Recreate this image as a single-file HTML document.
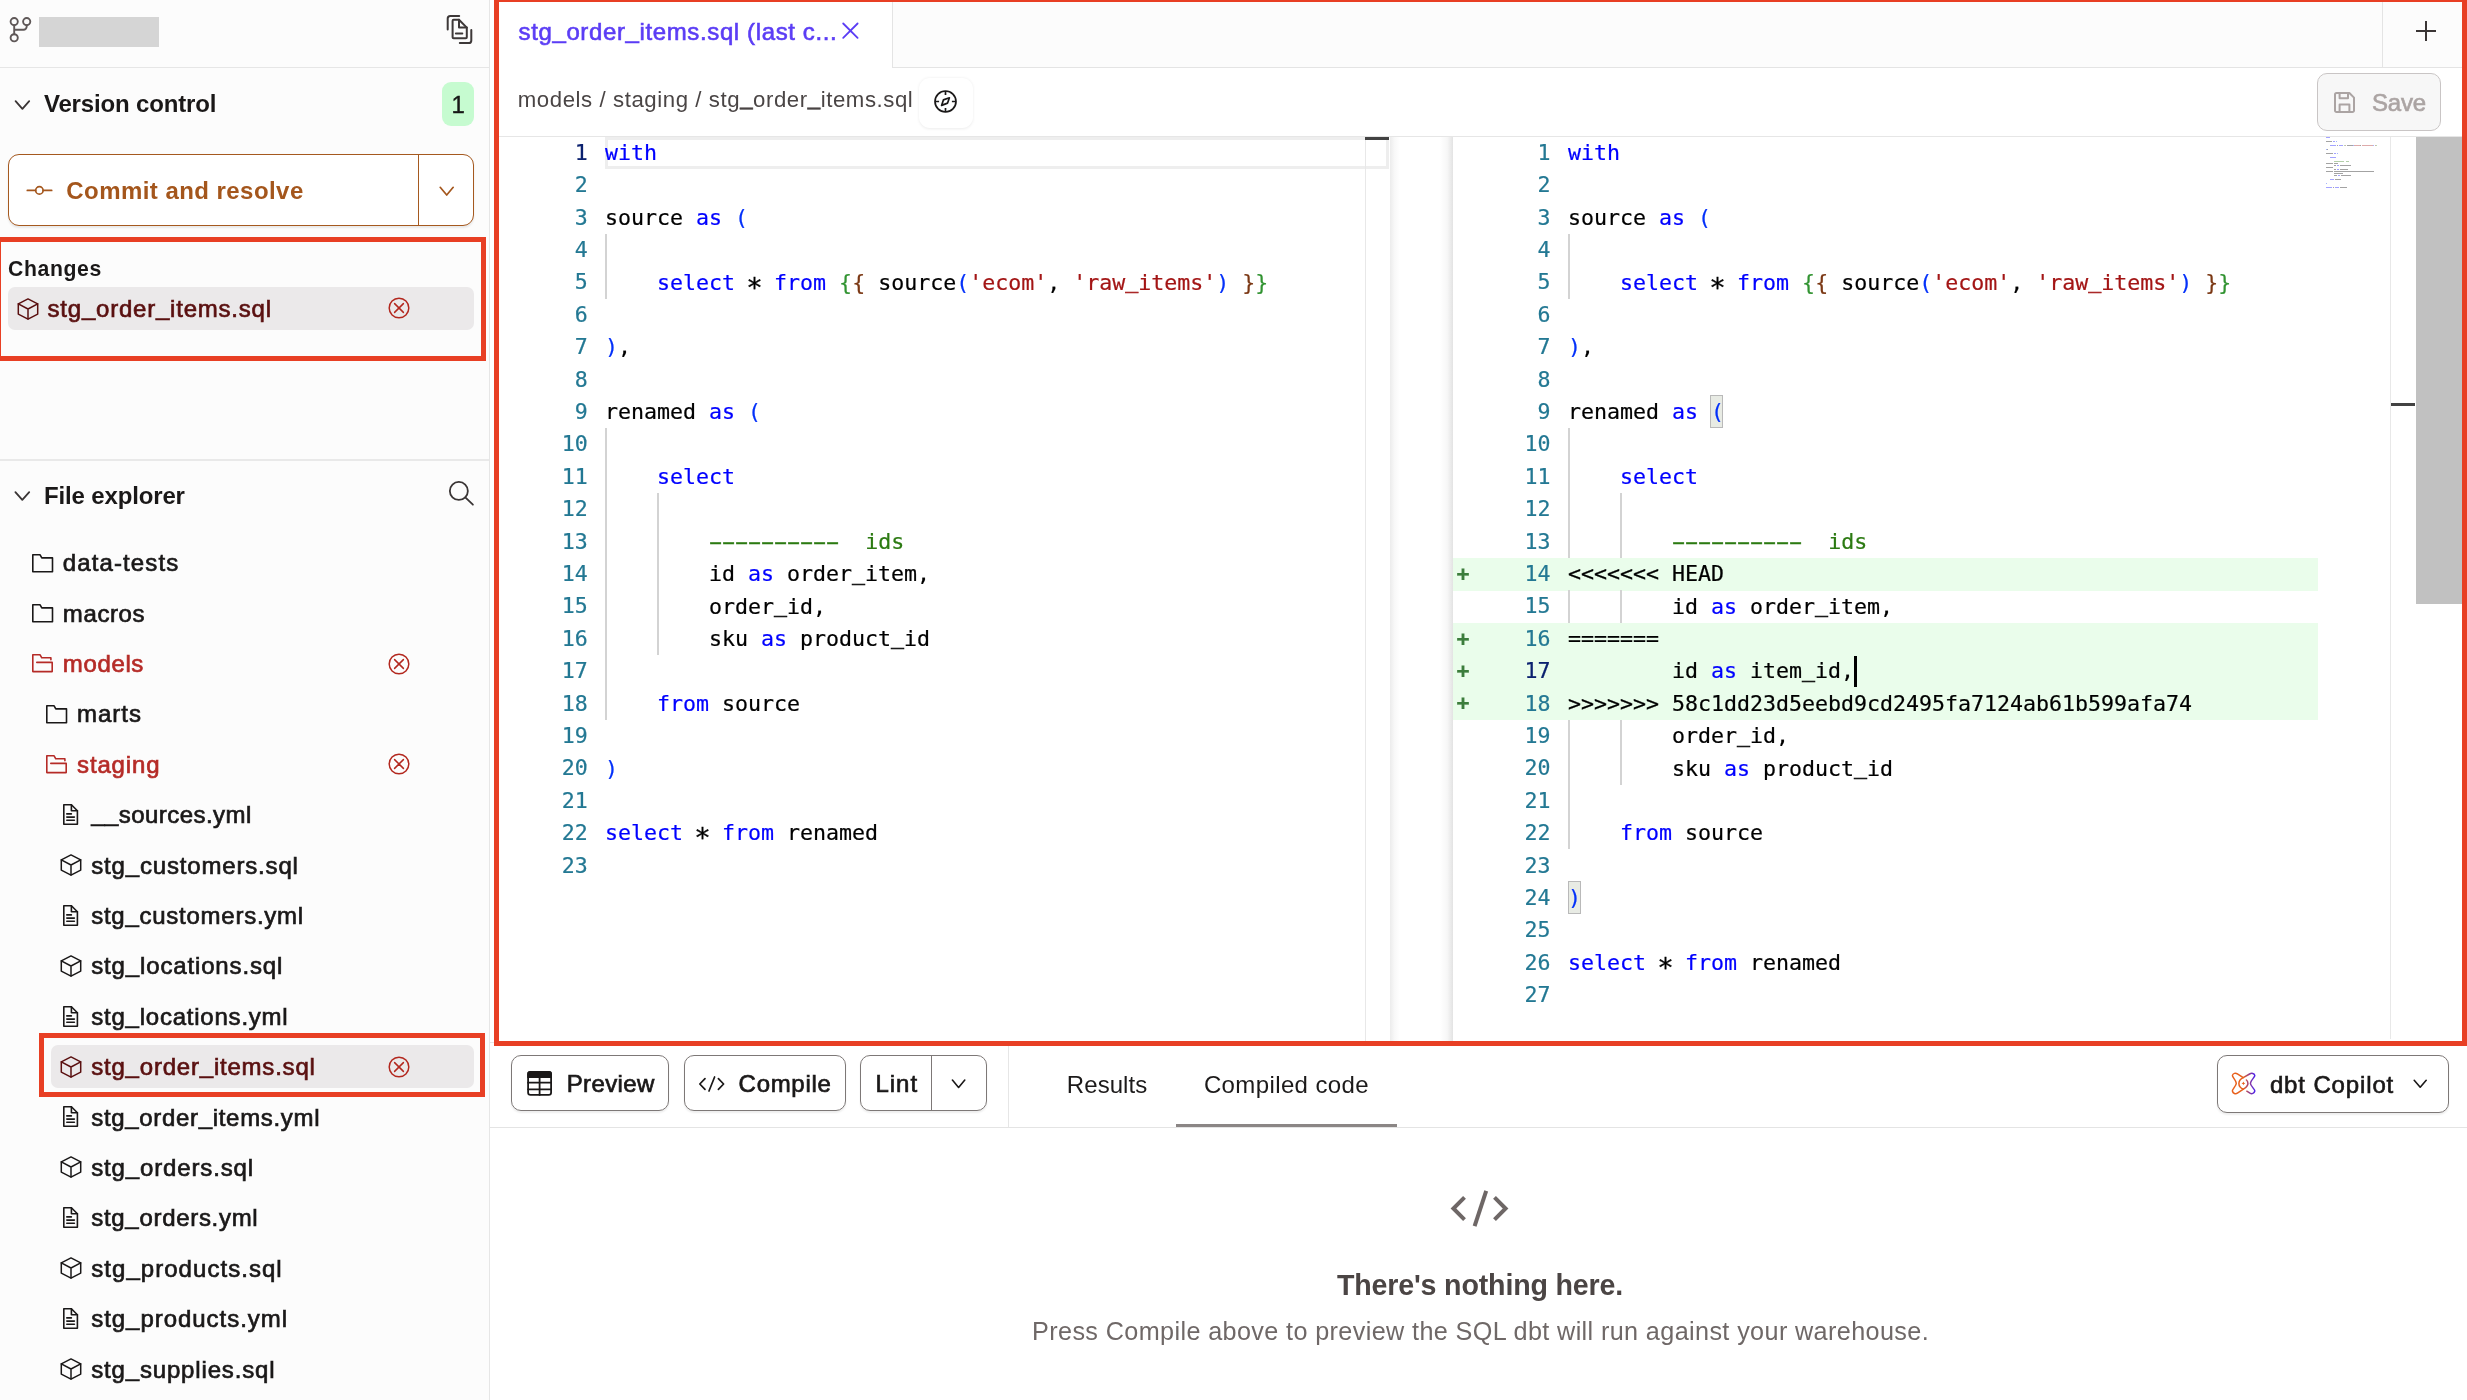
<!DOCTYPE html>
<html lang="en"><head><meta charset="utf-8"><title>dbt Cloud IDE</title>
<style>
*{box-sizing:border-box}
html,body{margin:0;padding:0}
body{width:2467px;height:1400px;overflow:hidden;background:#fff;position:relative;font-family:"Liberation Sans", sans-serif;}
#app{position:absolute;left:0;top:0;width:2467px;height:1400px;will-change:transform}
.a{position:absolute}
.t{position:absolute;white-space:pre;line-height:1;font-family:"Liberation Sans", sans-serif}
.ic{position:absolute;overflow:visible;fill:none;stroke-linecap:round;stroke-linejoin:round}
.code{position:absolute;white-space:pre;font-family:"DejaVu Sans Mono", "Liberation Mono", monospace;font-size:21.6px;line-height:32.4px;height:32.4px;color:#000;-webkit-text-stroke:.22px}
.ln{position:absolute;white-space:pre;font-family:"DejaVu Sans Mono", "Liberation Mono", monospace;font-size:21.6px;line-height:32.4px;height:32.4px;color:#237893;text-align:right;width:80px;-webkit-text-stroke:.2px}
.k{color:#0000ff}.p{color:#0431fa}.g{color:#319331}.b{color:#7b3814}.s{color:#a31515}.c{color:#2c7a12}
.ast{display:inline-block;transform:translateY(5.5px) scale(1.27)}
.d{display:inline-block;transform:scaleX(1.9);-webkit-text-stroke:.3px #2c7a12}
.u{position:relative;top:-1.6px;-webkit-text-stroke:.5px currentColor}
.uu{position:relative;top:-2px;-webkit-text-stroke:.6px currentColor}
.guide{position:absolute;width:2px;background:#d3d3d3}
.redbox{position:absolute;border:5px solid #e83f24}
.mm i{position:absolute;height:1.1px;opacity:.36}
</style></head>
<body>
<div id="app">
<div class="a" style="left:0;top:0;width:489px;height:1400px;background:#fcfcfc"></div>
<div class="a" style="left:489px;top:0;width:1px;height:1400px;background:#e6e6e6"></div>
<div class="a" style="left:0;top:67px;width:489px;height:1px;background:#e6e6e6"></div>
<svg class="ic" style="left:8px;top:15px" width="26" height="30" viewBox="8 15 26 30" ><g stroke="#5f5858" stroke-width="1.9"><circle cx="14.2" cy="21.6" r="3.6"/><circle cx="26.7" cy="21.6" r="3.6"/><circle cx="14.2" cy="37.8" r="3.6"/><path d="M14.2 25.2V34.2M26.7 25.2v1.3a3.2 3.2 0 0 1-3.2 3.2H14.2"/></g></svg>
<div class="a" style="left:38.5px;top:16.5px;width:120px;height:30px;background:#d5d5d5"></div>
<svg class="ic" style="left:445px;top:13px" width="30" height="33" viewBox="445 13 30 33" ><g stroke="#3d3838" stroke-width="2"><path d="M447.7 29.4V18.6a2.6 2.6 0 0 1 2.6-2.6H459.2"/><path d="M471.3 29.9V40.4a2.6 2.6 0 0 1-2.6 2.6H459.8"/><path d="M452.6 20.8a1 1 0 0 1 1-1H459l7.8 7.8V37.2a1 1 0 0 1-1 1H453.6a1 1 0 0 1-1-1Z"/><path d="M459 19.8V27.6H466.8"/><path d="M455.9 33.4H462.3"/></g></svg>
<svg class="ic" style="left:12px;top:98px" width="20" height="14" viewBox="12 98 20 14" ><polyline points="15.6,101.2 22.4,108.8 29.2,101.2" stroke="#3a3535" stroke-width="1.8"/></svg>
<span class="t" style="left:43.92px;top:92.18px;font-size:24px;font-weight:700;color:#1a1818;letter-spacing:-0.160px;">Version control</span>
<div class="a" style="left:442px;top:82px;width:32px;height:44px;border-radius:9px;background:#c6fbd0"></div>
<span class="t" style="left:451.52px;top:93.18px;font-size:24px;font-weight:400;color:#161616;letter-spacing:0.000px;-webkit-text-stroke:0.4px #161616;">1</span>
<div class="a" style="left:8px;top:154px;width:466px;height:72px;border:1.4px solid #a5591f;border-radius:11px;background:#fff;box-shadow:0 1.5px 2px rgba(0,0,0,0.08)"></div>
<div class="a" style="left:417.7px;top:154px;width:1.4px;height:72px;background:#a5591f"></div>
<svg class="ic" style="left:26px;top:184px" width="28" height="13" viewBox="26 184 28 13" ><g stroke="#a4561c" stroke-width="1.7"><path d="M27.3 190.4H35.6M43.2 190.4H51.7"/><circle cx="39.4" cy="190.4" r="3.7"/></g></svg>
<span class="t" style="left:66.32px;top:178.78px;font-size:24px;font-weight:700;color:#a4561c;letter-spacing:0.444px;">Commit and resolve</span>
<svg class="ic" style="left:438px;top:185px" width="18" height="12" viewBox="438 185 18 12" ><polyline points="440.2,187.3 446.7,195 453.2,187.3" stroke="#a4561c" stroke-width="1.7"/></svg>
<span class="t" style="left:7.95px;top:258.25px;font-size:21.2px;font-weight:700;color:#1a1818;letter-spacing:0.654px;">Changes</span>
<div class="a" style="left:8px;top:287px;width:466px;height:43px;border-radius:7px;background:#ebe9ea"></div>
<svg class="ic" style="left:15.5px;top:296.6px" width="24" height="24" viewBox="15.5 296.6 24 24" ><g stroke="#5a1010" stroke-width="1.5"><polygon points="27.5,298.5 37.2,303.5 37.2,313.7 27.5,318.7 17.8,313.7 17.8,303.5"/><path d="M17.8 303.5L27.5 308.6L37.2 303.5M27.5 308.6V318.7"/></g></svg>
<span class="t" style="left:47.52px;top:296.88px;font-size:24px;font-weight:400;color:#5a1010;letter-spacing:0.779px;-webkit-text-stroke:0.68px #5a1010;">stg<span class="uu">_</span>order<span class="uu">_</span>items.sql</span>
<svg class="ic" style="left:386.5px;top:296.4px" width="24" height="24" viewBox="386.5 296.4 24 24" ><g stroke="#b3281f" stroke-width="1.5"><circle cx="398.5" cy="308.4" r="9.8"/><path d="M394.1 304.0L402.9 312.79999999999995M402.9 304.0L394.1 312.79999999999995"/></g></svg>
<div class="redbox" style="left:-4px;top:237px;width:490px;height:124px"></div>
<div class="a" style="left:0;top:459px;width:489px;height:2px;background:#e9e9e9"></div>
<svg class="ic" style="left:12px;top:489px" width="20" height="14" viewBox="12 489 20 14" ><polyline points="15.4,492.2 22.3,499.9 29.2,492.2" stroke="#3a3535" stroke-width="1.8"/></svg>
<span class="t" style="left:43.92px;top:484.18px;font-size:24px;font-weight:700;color:#1a1818;letter-spacing:-0.140px;">File explorer</span>
<svg class="ic" style="left:446px;top:478px" width="30" height="30" viewBox="446 478 30 30" ><g stroke="#3a3535" stroke-width="1.8"><circle cx="458.85" cy="490.9" r="9"/><path d="M465.3 497.3L472.9 504.7"/></g></svg>
<svg class="ic" style="left:30.7px;top:552.5px" width="24" height="21" viewBox="30.7 552.5 24 21" ><path stroke="#1a1818" stroke-width="1.6" d="M32.5 571.2V554.3H39.8L41.5 557.4H52.2V571.2Z"/></svg>
<span class="t" style="left:62.82px;top:551.18px;font-size:24px;font-weight:400;color:#1a1818;letter-spacing:1.108px;-webkit-text-stroke:0.68px #1a1818;">data-tests</span>
<svg class="ic" style="left:30.7px;top:602.9px" width="24" height="21" viewBox="30.7 602.9 24 21" ><path stroke="#1a1818" stroke-width="1.6" d="M32.5 621.6V604.7H39.8L41.5 607.8H52.2V621.6Z"/></svg>
<span class="t" style="left:62.82px;top:601.58px;font-size:24px;font-weight:400;color:#1a1818;letter-spacing:0.614px;-webkit-text-stroke:0.68px #1a1818;">macros</span>
<svg class="ic" style="left:30.7px;top:653.3px" width="24" height="21" viewBox="30.7 653.3 24 21" ><path stroke="#b52b27" stroke-width="1.6" d="M36.5 662.7H51.9V671.9H32.5V655.1H39.8L41.5 658.1H50.6V660.1"/></svg>
<span class="t" style="left:62.82px;top:651.98px;font-size:24px;font-weight:400;color:#b52b27;letter-spacing:0.637px;-webkit-text-stroke:0.68px #b52b27;">models</span>
<svg class="ic" style="left:386.5px;top:651.5px" width="24" height="24" viewBox="386.5 651.5 24 24" ><g stroke="#b3281f" stroke-width="1.5"><circle cx="398.5" cy="663.5" r="9.8"/><path d="M394.1 659.1L402.9 667.9M402.9 659.1L394.1 667.9"/></g></svg>
<svg class="ic" style="left:44.9px;top:703.7px" width="24" height="21" viewBox="44.9 703.7 24 21" ><path stroke="#1a1818" stroke-width="1.6" d="M46.7 722.4V705.5H54.0L55.7 708.6H66.4V722.4Z"/></svg>
<span class="t" style="left:77.02px;top:702.38px;font-size:24px;font-weight:400;color:#1a1818;letter-spacing:0.990px;-webkit-text-stroke:0.68px #1a1818;">marts</span>
<svg class="ic" style="left:44.9px;top:754.1px" width="24" height="21" viewBox="44.9 754.1 24 21" ><path stroke="#b52b27" stroke-width="1.6" d="M50.7 763.5H66.1V772.7H46.7V755.9H54.0L55.7 758.9H64.8V760.9"/></svg>
<span class="t" style="left:77.02px;top:752.78px;font-size:24px;font-weight:400;color:#b52b27;letter-spacing:0.862px;-webkit-text-stroke:0.68px #b52b27;">staging</span>
<svg class="ic" style="left:386.5px;top:752.3000000000001px" width="24" height="24" viewBox="386.5 752.3000000000001 24 24" ><g stroke="#b3281f" stroke-width="1.5"><circle cx="398.5" cy="764.3000000000001" r="9.8"/><path d="M394.1 759.9000000000001L402.9 768.7M402.9 759.9000000000001L394.1 768.7"/></g></svg>
<svg class="ic" style="left:62.199999999999996px;top:803.0px" width="18" height="24" viewBox="62.199999999999996 803.0 18 24" ><g stroke="#1a1818" stroke-width="1.6"><path d="M64.0 804.8H71.6L77.6 810.8V824.2H64.0Z"/><path d="M71.6 804.8V810.8H77.6"/><path d="M67.0 813.9H71.6M67.0 817.1H74.6M67.0 820.3H74.6"/></g></svg>
<span class="t" style="left:91.22px;top:803.18px;font-size:24px;font-weight:400;color:#1a1818;letter-spacing:0.444px;-webkit-text-stroke:0.68px #1a1818;"><span class="uu">_</span><span class="uu">_</span>sources.yml</span>
<svg class="ic" style="left:58.69999999999999px;top:853.0px" width="24" height="24" viewBox="58.69999999999999 853.0 24 24" ><g stroke="#1a1818" stroke-width="1.5"><polygon points="70.7,854.9 80.4,859.9 80.4,870.1 70.7,875.1 61.0,870.1 61.0,859.9"/><path d="M61.0 859.9L70.7 865.0L80.4 859.9M70.7 865.0V875.1"/></g></svg>
<span class="t" style="left:91.22px;top:853.58px;font-size:24px;font-weight:400;color:#1a1818;letter-spacing:0.828px;-webkit-text-stroke:0.68px #1a1818;">stg<span class="uu">_</span>customers.sql</span>
<svg class="ic" style="left:62.199999999999996px;top:903.8px" width="18" height="24" viewBox="62.199999999999996 903.8 18 24" ><g stroke="#1a1818" stroke-width="1.6"><path d="M64.0 905.6H71.6L77.6 911.6V925.0H64.0Z"/><path d="M71.6 905.6V911.6H77.6"/><path d="M67.0 914.7H71.6M67.0 917.9H74.6M67.0 921.1H74.6"/></g></svg>
<span class="t" style="left:91.22px;top:903.98px;font-size:24px;font-weight:400;color:#1a1818;letter-spacing:0.737px;-webkit-text-stroke:0.68px #1a1818;">stg<span class="uu">_</span>customers.yml</span>
<svg class="ic" style="left:58.69999999999999px;top:953.8000000000001px" width="24" height="24" viewBox="58.69999999999999 953.8000000000001 24 24" ><g stroke="#1a1818" stroke-width="1.5"><polygon points="70.7,955.7 80.4,960.7 80.4,970.9 70.7,975.9 61.0,970.9 61.0,960.7"/><path d="M61.0 960.7L70.7 965.8L80.4 960.7M70.7 965.8V975.9"/></g></svg>
<span class="t" style="left:91.22px;top:954.38px;font-size:24px;font-weight:400;color:#1a1818;letter-spacing:0.851px;-webkit-text-stroke:0.68px #1a1818;">stg<span class="uu">_</span>locations.sql</span>
<svg class="ic" style="left:62.199999999999996px;top:1004.5999999999999px" width="18" height="24" viewBox="62.199999999999996 1004.5999999999999 18 24" ><g stroke="#1a1818" stroke-width="1.6"><path d="M64.0 1006.4H71.6L77.6 1012.4V1025.8H64.0Z"/><path d="M71.6 1006.4V1012.4H77.6"/><path d="M67.0 1015.5H71.6M67.0 1018.7H74.6M67.0 1021.9H74.6"/></g></svg>
<span class="t" style="left:91.22px;top:1004.78px;font-size:24px;font-weight:400;color:#1a1818;letter-spacing:0.774px;-webkit-text-stroke:0.68px #1a1818;">stg<span class="uu">_</span>locations.yml</span>
<div class="a" style="left:51px;top:1045.1px;width:423px;height:43px;border-radius:7px;background:#ebe9ea"></div>
<svg class="ic" style="left:58.69999999999999px;top:1054.6000000000001px" width="24" height="24" viewBox="58.69999999999999 1054.6000000000001 24 24" ><g stroke="#5a1010" stroke-width="1.5"><polygon points="70.7,1056.5 80.4,1061.5 80.4,1071.7 70.7,1076.7 61.0,1071.7 61.0,1061.5"/><path d="M61.0 1061.5L70.7 1066.6L80.4 1061.5M70.7 1066.6V1076.7"/></g></svg>
<span class="t" style="left:91.22px;top:1055.18px;font-size:24px;font-weight:400;color:#5a1010;letter-spacing:0.790px;-webkit-text-stroke:0.68px #5a1010;">stg<span class="uu">_</span>order<span class="uu">_</span>items.sql</span>
<svg class="ic" style="left:386.5px;top:1054.7px" width="24" height="24" viewBox="386.5 1054.7 24 24" ><g stroke="#b3281f" stroke-width="1.5"><circle cx="398.5" cy="1066.7" r="9.8"/><path d="M394.1 1062.3L402.9 1071.1000000000001M402.9 1062.3L394.1 1071.1000000000001"/></g></svg>
<svg class="ic" style="left:62.199999999999996px;top:1105.4px" width="18" height="24" viewBox="62.199999999999996 1105.4 18 24" ><g stroke="#1a1818" stroke-width="1.6"><path d="M64.0 1107.2H71.6L77.6 1113.2V1126.6H64.0Z"/><path d="M71.6 1107.2V1113.2H77.6"/><path d="M67.0 1116.3H71.6M67.0 1119.5H74.6M67.0 1122.7H74.6"/></g></svg>
<span class="t" style="left:91.22px;top:1105.58px;font-size:24px;font-weight:400;color:#1a1818;letter-spacing:0.677px;-webkit-text-stroke:0.68px #1a1818;">stg<span class="uu">_</span>order<span class="uu">_</span>items.yml</span>
<svg class="ic" style="left:58.69999999999999px;top:1155.4px" width="24" height="24" viewBox="58.69999999999999 1155.4 24 24" ><g stroke="#1a1818" stroke-width="1.5"><polygon points="70.7,1157.3 80.4,1162.3 80.4,1172.5 70.7,1177.5 61.0,1172.5 61.0,1162.3"/><path d="M61.0 1162.3L70.7 1167.4L80.4 1162.3M70.7 1167.4V1177.5"/></g></svg>
<span class="t" style="left:91.22px;top:1155.98px;font-size:24px;font-weight:400;color:#1a1818;letter-spacing:0.855px;-webkit-text-stroke:0.68px #1a1818;">stg<span class="uu">_</span>orders.sql</span>
<svg class="ic" style="left:62.199999999999996px;top:1206.1999999999998px" width="18" height="24" viewBox="62.199999999999996 1206.1999999999998 18 24" ><g stroke="#1a1818" stroke-width="1.6"><path d="M64.0 1208.0H71.6L77.6 1214.0V1227.4H64.0Z"/><path d="M71.6 1208.0V1214.0H77.6"/><path d="M67.0 1217.1H71.6M67.0 1220.3H74.6M67.0 1223.5H74.6"/></g></svg>
<span class="t" style="left:91.22px;top:1206.38px;font-size:24px;font-weight:400;color:#1a1818;letter-spacing:0.698px;-webkit-text-stroke:0.68px #1a1818;">stg<span class="uu">_</span>orders.yml</span>
<svg class="ic" style="left:58.69999999999999px;top:1256.2px" width="24" height="24" viewBox="58.69999999999999 1256.2 24 24" ><g stroke="#1a1818" stroke-width="1.5"><polygon points="70.7,1258.1 80.4,1263.1 80.4,1273.3 70.7,1278.3 61.0,1273.3 61.0,1263.1"/><path d="M61.0 1263.1L70.7 1268.2L80.4 1263.1M70.7 1268.2V1278.3"/></g></svg>
<span class="t" style="left:91.22px;top:1256.78px;font-size:24px;font-weight:400;color:#1a1818;letter-spacing:1.046px;-webkit-text-stroke:0.68px #1a1818;">stg<span class="uu">_</span>products.sql</span>
<svg class="ic" style="left:62.199999999999996px;top:1307.0px" width="18" height="24" viewBox="62.199999999999996 1307.0 18 24" ><g stroke="#1a1818" stroke-width="1.6"><path d="M64.0 1308.8H71.6L77.6 1314.8V1328.2H64.0Z"/><path d="M71.6 1308.8V1314.8H77.6"/><path d="M67.0 1317.9H71.6M67.0 1321.1H74.6M67.0 1324.3H74.6"/></g></svg>
<span class="t" style="left:91.22px;top:1307.18px;font-size:24px;font-weight:400;color:#1a1818;letter-spacing:0.957px;-webkit-text-stroke:0.68px #1a1818;">stg<span class="uu">_</span>products.yml</span>
<svg class="ic" style="left:58.69999999999999px;top:1357.0000000000002px" width="24" height="24" viewBox="58.69999999999999 1357.0000000000002 24 24" ><g stroke="#1a1818" stroke-width="1.5"><polygon points="70.7,1358.9 80.4,1363.9 80.4,1374.1 70.7,1379.1 61.0,1374.1 61.0,1363.9"/><path d="M61.0 1363.9L70.7 1369.0L80.4 1363.9M70.7 1369.0V1379.1"/></g></svg>
<span class="t" style="left:91.22px;top:1357.58px;font-size:24px;font-weight:400;color:#1a1818;letter-spacing:0.833px;-webkit-text-stroke:0.68px #1a1818;">stg<span class="uu">_</span>supplies.sql</span>
<div class="redbox" style="left:39.3px;top:1032.8px;width:445.4px;height:64.6px"></div>
<div class="a" style="left:892px;top:0;width:1575px;height:68px;background:#fcfcfc;border-left:1px solid #e4e4e4;border-bottom:1.5px solid #e4e4e4"></div>
<div class="a" style="left:2382px;top:0;width:1px;height:67px;background:#e4e4e4"></div>
<span class="t" style="left:518.52px;top:19.68px;font-size:24px;font-weight:400;color:#5b3df5;letter-spacing:0.622px;-webkit-text-stroke:0.62px #5b3df5;">stg<span class="uu">_</span>order<span class="uu">_</span>items.sql (last c...</span>
<svg class="ic" style="left:840px;top:20px" width="21" height="21" viewBox="840 20 21 21" ><path stroke="#5b3df5" stroke-width="1.8" d="M843.2 23.5L857.6 37.9M857.6 23.5L843.2 37.9"/></svg>
<svg class="ic" style="left:2414px;top:19px" width="24" height="24" viewBox="2414 19 24 24" ><path stroke="#3a3535" stroke-width="2" stroke-linecap="butt" d="M2416 31H2436M2426 21V41"/></svg>
<span class="t" style="left:517.80px;top:88.51px;font-size:22.2px;font-weight:400;color:#4a4545;letter-spacing:0.576px;">models / staging / stg<span class="uu">_</span>order<span class="uu">_</span>items.sql</span>
<div class="a" style="left:918.5px;top:77.5px;width:54px;height:50px;border-radius:11px;background:#fff;box-shadow:0 0.5px 3px rgba(0,0,0,0.08)"></div>
<svg class="ic" style="left:932px;top:88px" width="28" height="28" viewBox="932 88 28 28" ><g stroke="#1a1818" stroke-width="1.7" stroke-linecap="butt"><circle cx="945.5" cy="101.5" r="10.5"/><path d="M945.5 91.1v4M945.5 107.9v4M935.1 101.5h4M951.9 101.5h4"/><path d="M941.6 105.4L943.4 99.9L949.4 97.8L947.6 103.1Z"/></g></svg>
<div class="a" style="left:2317px;top:73px;width:124px;height:58px;border-radius:10px;border:1px solid #c9c5c5;background:#f7f7f7"></div>
<svg class="ic" style="left:2332px;top:90px" width="25" height="25" viewBox="2332 90 25 25" ><g stroke="#aba4a3" stroke-width="2"><path d="M2335 94.5a1.5 1.5 0 0 1 1.5-1.5H2349.4L2354 97.6V110.5a1.5 1.5 0 0 1-1.5 1.5H2336.5a1.5 1.5 0 0 1-1.5-1.5Z"/><path d="M2339.6 93V98.2H2348V93"/><path d="M2339.6 112V104.4H2349.4V112"/></g></svg>
<span class="t" style="left:2371.92px;top:91.38px;font-size:24px;font-weight:400;color:#aba4a3;letter-spacing:-0.181px;-webkit-text-stroke:0.62px #aba4a3;">Save</span>
<div class="a" style="left:499px;top:136px;width:1963px;height:1px;background:#e6e6e6"></div>
<div class="a" style="left:605px;top:136.6px;width:784px;height:32.4px;border:3.6px solid #eeeeee"></div>
<div class="ln" style="left:507.7px;top:136.8px;color:#0b216f">1</div>
<div class="code" style="left:605px;top:137.0px"><span class="k">with</span></div>
<div class="ln" style="left:507.7px;top:169.2px">2</div>
<div class="ln" style="left:507.7px;top:201.6px">3</div>
<div class="code" style="left:605px;top:201.8px">source <span class="k">as</span> <span class="p">(</span></div>
<div class="ln" style="left:507.7px;top:234.0px">4</div>
<div class="ln" style="left:507.7px;top:266.4px">5</div>
<div class="code" style="left:605px;top:266.6px">    <span class="k">select</span> <span class="ast">*</span> <span class="k">from</span> <span class="g">{</span><span class="b">{</span> source<span class="p">(</span><span class="s">'ecom'</span>, <span class="s">'raw<span class="u">_</span>items'</span><span class="p">)</span> <span class="b">}</span><span class="g">}</span></div>
<div class="ln" style="left:507.7px;top:298.8px">6</div>
<div class="ln" style="left:507.7px;top:331.2px">7</div>
<div class="code" style="left:605px;top:331.4px"><span class="p">)</span>,</div>
<div class="ln" style="left:507.7px;top:363.6px">8</div>
<div class="ln" style="left:507.7px;top:396.0px">9</div>
<div class="code" style="left:605px;top:396.2px">renamed <span class="k">as</span> <span class="p">(</span></div>
<div class="ln" style="left:507.7px;top:428.4px">10</div>
<div class="ln" style="left:507.7px;top:460.8px">11</div>
<div class="code" style="left:605px;top:461.0px">    <span class="k">select</span></div>
<div class="ln" style="left:507.7px;top:493.2px">12</div>
<div class="ln" style="left:507.7px;top:525.6px">13</div>
<div class="code" style="left:605px;top:525.8px">        <span class="c"><span class="d">-</span><span class="d">-</span><span class="d">-</span><span class="d">-</span><span class="d">-</span><span class="d">-</span><span class="d">-</span><span class="d">-</span><span class="d">-</span><span class="d">-</span>  ids</span></div>
<div class="ln" style="left:507.7px;top:558.0px">14</div>
<div class="code" style="left:605px;top:558.2px">        id <span class="k">as</span> order<span class="u">_</span>item,</div>
<div class="ln" style="left:507.7px;top:590.4px">15</div>
<div class="code" style="left:605px;top:590.6px">        order<span class="u">_</span>id,</div>
<div class="ln" style="left:507.7px;top:622.8px">16</div>
<div class="code" style="left:605px;top:623.0px">        sku <span class="k">as</span> product<span class="u">_</span>id</div>
<div class="ln" style="left:507.7px;top:655.2px">17</div>
<div class="ln" style="left:507.7px;top:687.6px">18</div>
<div class="code" style="left:605px;top:687.8px">    <span class="k">from</span> source</div>
<div class="ln" style="left:507.7px;top:720.0px">19</div>
<div class="ln" style="left:507.7px;top:752.4px">20</div>
<div class="code" style="left:605px;top:752.6px"><span class="p">)</span></div>
<div class="ln" style="left:507.7px;top:784.8px">21</div>
<div class="ln" style="left:507.7px;top:817.2px">22</div>
<div class="code" style="left:605px;top:817.4px"><span class="k">select</span> <span class="ast">*</span> <span class="k">from</span> renamed</div>
<div class="ln" style="left:507.7px;top:849.6px">23</div>
<div class="guide" style="left:605px;top:233.8px;height:64.8px"></div>
<div class="guide" style="left:605px;top:428.2px;height:291.6px"></div>
<div class="guide" style="left:657px;top:493.0px;height:162.0px"></div>
<div class="a" style="left:1364.5px;top:137px;width:1px;height:904px;background:#e8e8e8"></div>
<div class="a" style="left:1365px;top:136.6px;width:24px;height:3px;background:#424242"></div>
<div class="a" style="left:1390px;top:137px;width:10px;height:904px;background:linear-gradient(90deg,#ececec,#f8f8f8 45%,#fff)"></div>
<div class="a" style="left:1440px;top:137px;width:12.5px;height:904px;background:linear-gradient(90deg,#fff,#f7f7f7 55%,#e3e3e3)"></div>
<div class="a" style="left:1452.5px;top:557.8px;width:865.5px;height:32.9px;background:#eafdeb"></div>
<div class="a" style="left:1452.5px;top:622.6px;width:865.5px;height:97.7px;background:#eafdeb"></div>
<div class="code" style="left:1456.5px;top:557.8px;color:#3c7d3c;font-weight:700">+</div>
<div class="code" style="left:1456.5px;top:622.6px;color:#3c7d3c;font-weight:700">+</div>
<div class="code" style="left:1456.5px;top:655.0px;color:#3c7d3c;font-weight:700">+</div>
<div class="code" style="left:1456.5px;top:687.4px;color:#3c7d3c;font-weight:700">+</div>
<div class="a" style="left:1710px;top:395.4px;width:13.4px;height:33px;background:#e8ebe4;border:1px solid #b9b9b9"></div>
<div class="a" style="left:1567.6px;top:881.4px;width:13.4px;height:33px;background:#e8ebe4;border:1px solid #b9b9b9"></div>
<div class="ln" style="left:1470.6px;top:136.8px">1</div>
<div class="code" style="left:1568px;top:137.0px"><span class="k">with</span></div>
<div class="ln" style="left:1470.6px;top:169.2px">2</div>
<div class="ln" style="left:1470.6px;top:201.6px">3</div>
<div class="code" style="left:1568px;top:201.8px">source <span class="k">as</span> <span class="p">(</span></div>
<div class="ln" style="left:1470.6px;top:234.0px">4</div>
<div class="ln" style="left:1470.6px;top:266.4px">5</div>
<div class="code" style="left:1568px;top:266.6px">    <span class="k">select</span> <span class="ast">*</span> <span class="k">from</span> <span class="g">{</span><span class="b">{</span> source<span class="p">(</span><span class="s">'ecom'</span>, <span class="s">'raw<span class="u">_</span>items'</span><span class="p">)</span> <span class="b">}</span><span class="g">}</span></div>
<div class="ln" style="left:1470.6px;top:298.8px">6</div>
<div class="ln" style="left:1470.6px;top:331.2px">7</div>
<div class="code" style="left:1568px;top:331.4px"><span class="p">)</span>,</div>
<div class="ln" style="left:1470.6px;top:363.6px">8</div>
<div class="ln" style="left:1470.6px;top:396.0px">9</div>
<div class="code" style="left:1568px;top:396.2px">renamed <span class="k">as</span> <span class="p">(</span></div>
<div class="ln" style="left:1470.6px;top:428.4px">10</div>
<div class="ln" style="left:1470.6px;top:460.8px">11</div>
<div class="code" style="left:1568px;top:461.0px">    <span class="k">select</span></div>
<div class="ln" style="left:1470.6px;top:493.2px">12</div>
<div class="ln" style="left:1470.6px;top:525.6px">13</div>
<div class="code" style="left:1568px;top:525.8px">        <span class="c"><span class="d">-</span><span class="d">-</span><span class="d">-</span><span class="d">-</span><span class="d">-</span><span class="d">-</span><span class="d">-</span><span class="d">-</span><span class="d">-</span><span class="d">-</span>  ids</span></div>
<div class="ln" style="left:1470.6px;top:558.0px">14</div>
<div class="code" style="left:1568px;top:558.2px">&lt;&lt;&lt;&lt;&lt;&lt;&lt; HEAD</div>
<div class="ln" style="left:1470.6px;top:590.4px">15</div>
<div class="code" style="left:1568px;top:590.6px">        id <span class="k">as</span> order<span class="u">_</span>item,</div>
<div class="ln" style="left:1470.6px;top:622.8px">16</div>
<div class="code" style="left:1568px;top:623.0px">=======</div>
<div class="ln" style="left:1470.6px;top:655.2px;color:#0b216f">17</div>
<div class="code" style="left:1568px;top:655.4px">        id <span class="k">as</span> item<span class="u">_</span>id,</div>
<div class="ln" style="left:1470.6px;top:687.6px">18</div>
<div class="code" style="left:1568px;top:687.8px">&gt;&gt;&gt;&gt;&gt;&gt;&gt; 58c1dd23d5eebd9cd2495fa7124ab61b599afa74</div>
<div class="ln" style="left:1470.6px;top:720.0px">19</div>
<div class="code" style="left:1568px;top:720.2px">        order<span class="u">_</span>id,</div>
<div class="ln" style="left:1470.6px;top:752.4px">20</div>
<div class="code" style="left:1568px;top:752.6px">        sku <span class="k">as</span> product<span class="u">_</span>id</div>
<div class="ln" style="left:1470.6px;top:784.8px">21</div>
<div class="ln" style="left:1470.6px;top:817.2px">22</div>
<div class="code" style="left:1568px;top:817.4px">    <span class="k">from</span> source</div>
<div class="ln" style="left:1470.6px;top:849.6px">23</div>
<div class="ln" style="left:1470.6px;top:882.0px">24</div>
<div class="code" style="left:1568px;top:882.2px"><span class="p">)</span></div>
<div class="ln" style="left:1470.6px;top:914.4px">25</div>
<div class="ln" style="left:1470.6px;top:946.8px">26</div>
<div class="code" style="left:1568px;top:947.0px"><span class="k">select</span> <span class="ast">*</span> <span class="k">from</span> renamed</div>
<div class="ln" style="left:1470.6px;top:979.2px">27</div>
<div class="guide" style="left:1568px;top:233.8px;height:64.8px"></div>
<div class="guide" style="left:1568px;top:428.2px;height:129.6px"></div>
<div class="guide" style="left:1568px;top:590.2px;height:32.4px"></div>
<div class="guide" style="left:1568px;top:719.8px;height:129.6px"></div>
<div class="guide" style="left:1620px;top:493.0px;height:64.8px"></div>
<div class="guide" style="left:1620px;top:590.2px;height:32.4px"></div>
<div class="guide" style="left:1620px;top:719.8px;height:64.8px"></div>
<div class="a" style="left:1854px;top:656.0px;width:3.4px;height:31px;background:#000"></div>
<div class="a" style="left:2390px;top:137px;width:1px;height:901.5px;background:#e8e8e8"></div>
<div class="a" style="left:2391px;top:403px;width:23.5px;height:3px;background:#424242"></div>
<div class="a" style="left:2416px;top:137px;width:46px;height:467px;background:#c1c1c1"></div>
<div class="mm"><i style="left:2326px;top:137.3px;width:4px;background:#0000ff"></i><i style="left:2326px;top:141.3px;width:6px;background:#000000"></i><i style="left:2333px;top:141.3px;width:2px;background:#0000ff"></i><i style="left:2336px;top:141.3px;width:1px;background:#0431fa"></i><i style="left:2330px;top:145.3px;width:6px;background:#0000ff"></i><i style="left:2337px;top:145.3px;width:1px;background:#000000"></i><i style="left:2339px;top:145.3px;width:4px;background:#0000ff"></i><i style="left:2344px;top:145.3px;width:1px;background:#319331"></i><i style="left:2345px;top:145.3px;width:1px;background:#7b3814"></i><i style="left:2347px;top:145.3px;width:6px;background:#000000"></i><i style="left:2353px;top:145.3px;width:1px;background:#0431fa"></i><i style="left:2354px;top:145.3px;width:6px;background:#a31515"></i><i style="left:2360px;top:145.3px;width:1px;background:#000000"></i><i style="left:2362px;top:145.3px;width:11px;background:#a31515"></i><i style="left:2373px;top:145.3px;width:1px;background:#0431fa"></i><i style="left:2375px;top:145.3px;width:1px;background:#7b3814"></i><i style="left:2376px;top:145.3px;width:1px;background:#319331"></i><i style="left:2326px;top:149.3px;width:1px;background:#0431fa"></i><i style="left:2327px;top:149.3px;width:1px;background:#000000"></i><i style="left:2326px;top:153.3px;width:7px;background:#000000"></i><i style="left:2334px;top:153.3px;width:2px;background:#0000ff"></i><i style="left:2337px;top:153.3px;width:1px;background:#0431fa"></i><i style="left:2330px;top:157.3px;width:6px;background:#0000ff"></i><i style="left:2334px;top:161.3px;width:10px;background:#2c7a12"></i><i style="left:2346px;top:161.3px;width:3px;background:#2c7a12"></i><i style="left:2326px;top:163.3px;width:7px;background:#000000"></i><i style="left:2334px;top:163.3px;width:4px;background:#000000"></i><i style="left:2334px;top:165.3px;width:2px;background:#000000"></i><i style="left:2337px;top:165.3px;width:2px;background:#0000ff"></i><i style="left:2340px;top:165.3px;width:11px;background:#000000"></i><i style="left:2326px;top:167.3px;width:7px;background:#000000"></i><i style="left:2334px;top:169.3px;width:2px;background:#000000"></i><i style="left:2337px;top:169.3px;width:2px;background:#0000ff"></i><i style="left:2340px;top:169.3px;width:8px;background:#000000"></i><i style="left:2326px;top:171.3px;width:7px;background:#000000"></i><i style="left:2334px;top:171.3px;width:40px;background:#000000"></i><i style="left:2334px;top:173.3px;width:9px;background:#000000"></i><i style="left:2334px;top:175.3px;width:3px;background:#000000"></i><i style="left:2338px;top:175.3px;width:2px;background:#0000ff"></i><i style="left:2341px;top:175.3px;width:10px;background:#000000"></i><i style="left:2330px;top:179.3px;width:4px;background:#0000ff"></i><i style="left:2335px;top:179.3px;width:6px;background:#000000"></i><i style="left:2326px;top:183.3px;width:1px;background:#0431fa"></i><i style="left:2326px;top:187.3px;width:6px;background:#0000ff"></i><i style="left:2333px;top:187.3px;width:1px;background:#000000"></i><i style="left:2335px;top:187.3px;width:4px;background:#0000ff"></i><i style="left:2340px;top:187.3px;width:7px;background:#000000"></i></div>
<div class="a" style="left:490px;top:1041.5px;width:1977px;height:1px;background:#e6e6e6"></div>
<div class="a" style="left:490px;top:1127px;width:1977px;height:1px;background:#e4e4e4"></div>
<div class="a" style="left:1008px;top:1045px;width:1px;height:82px;background:#e6e6e6"></div>
<div class="a" style="left:511px;top:1055px;width:158px;height:56px;border:1.2px solid #7d7877;border-radius:10px;background:#fff;box-shadow:0 1.5px 2px rgba(0,0,0,0.07)"></div>
<svg class="ic" style="left:526px;top:1070px" width="28" height="28" viewBox="526 1070 28 28" ><g stroke="#1a1818" stroke-width="1.8"><rect x="528.1" y="1072" width="23" height="22.9" rx="2.4"/><path d="M528.1 1082.7H551.1M528.1 1089.3H551.1M539.6 1076V1094.9"/></g><path d="M528.1 1077.2V1074.4a2.4 2.4 0 0 1 2.4-2.4H548.7a2.4 2.4 0 0 1 2.4 2.4V1077.2Z" fill="#1a1818" stroke="#1a1818" stroke-width="1.8"/></svg>
<span class="t" style="left:566.72px;top:1072.08px;font-size:24px;font-weight:400;color:#1a1818;letter-spacing:0.383px;-webkit-text-stroke:0.68px #1a1818;">Preview</span>
<div class="a" style="left:684px;top:1055px;width:162px;height:56px;border:1.2px solid #7d7877;border-radius:10px;background:#fff;box-shadow:0 1.5px 2px rgba(0,0,0,0.07)"></div>
<svg class="ic" style="left:697px;top:1074px" width="30" height="20" viewBox="697 1074 30 20" ><g stroke="#1a1818" stroke-width="1.7"><polyline points="705,1078.6 699.8,1084 705,1089.4"/><path d="M714.6 1077L709 1091"/><polyline points="718.4,1078.6 723.6,1084 718.4,1089.4"/></g></svg>
<span class="t" style="left:738.62px;top:1072.08px;font-size:24px;font-weight:400;color:#1a1818;letter-spacing:0.688px;-webkit-text-stroke:0.68px #1a1818;">Compile</span>
<div class="a" style="left:860px;top:1055px;width:127px;height:56px;border:1.2px solid #7d7877;border-radius:10px;background:#fff;box-shadow:0 1.5px 2px rgba(0,0,0,0.07)"></div>
<div class="a" style="left:930.8px;top:1055px;width:1.2px;height:56px;background:#7d7877"></div>
<span class="t" style="left:875.42px;top:1072.08px;font-size:24px;font-weight:400;color:#1a1818;letter-spacing:0.986px;-webkit-text-stroke:0.68px #1a1818;">Lint</span>
<svg class="ic" style="left:950px;top:1077px" width="18" height="13" viewBox="950 1077 18 13" ><polyline points="952.4,1080 958.6,1087.4 964.8,1080" stroke="#1a1818" stroke-width="1.6"/></svg>
<span class="t" style="left:1066.82px;top:1072.88px;font-size:24px;font-weight:400;color:#1c1a1a;letter-spacing:0.071px;">Results</span>
<span class="t" style="left:1203.92px;top:1072.88px;font-size:24px;font-weight:400;color:#1c1a1a;letter-spacing:0.381px;">Compiled code</span>
<div class="a" style="left:1176px;top:1124px;width:221px;height:3.2px;background:#8b8685"></div>
<div class="a" style="left:2217px;top:1055px;width:232px;height:57.6px;border:1.2px solid #7d7877;border-radius:10px;background:#fff;box-shadow:0 1.5px 2px rgba(0,0,0,0.07)"></div>
<svg class="ic" style="left:2230px;top:1071px" width="27" height="25" viewBox="2230 1071 27 25" ><defs><linearGradient id="cg" x1="2232" y1="1083" x2="2255" y2="1083" gradientUnits="userSpaceOnUse"><stop offset="0" stop-color="#e8601c"/><stop offset=".5" stop-color="#e8601c"/><stop offset=".78" stop-color="#8a3a9a"/><stop offset="1" stop-color="#4a1ff0"/></linearGradient></defs>
<g stroke="url(#cg)" stroke-width="1.5"><path d="M2243.2 1077.7L2237.4 1073.9C2235.6 1072.7 2233 1073.200 2232.400 1075.400C2232 1077 2236.300 1080.500 2236.300 1083.200C2236.300 1086 2232 1089.500 2232.400 1091C2233 1093.600 2235.600 1094.400 2237.400 1093.200L2243.400 1089.200C2246.500 1087.400 2248.600 1084.500 2247.600 1081.800C2247.300 1081 2246.900 1080.400 2246.400 1080"/><path d="M2243.4 1089.2C2240.5 1088 2238.9 1085.600 2238.900 1083.400C2238.900 1080.800 2240.800 1079 2243.200 1077.700L2249.600 1074C2251.600 1072.800 2254.200 1073.300 2254.800 1075.400C2255.200 1077 2250.400 1080.500 2250.400 1083.200C2250.400 1086 2255.200 1089.400 2254.800 1091C2254.200 1093.400 2251.800 1094.200 2250 1093.200L2246.800 1091.200"/></g>
<path d="M2243.4 1081.5l.6 1.300 1.300.600-1.300.600-.6 1.300-.6-1.300-1.300-.600 1.300-.600Z" fill="#e8601c"/></svg>
<span class="t" style="left:2269.92px;top:1073.18px;font-size:24px;font-weight:400;color:#1a1818;letter-spacing:0.861px;-webkit-text-stroke:0.62px #1a1818;">dbt Copilot</span>
<svg class="ic" style="left:2411px;top:1077px" width="18" height="13" viewBox="2411 1077 18 13" ><polyline points="2414.2,1080.3 2420.2,1087.2 2426.2,1080.3" stroke="#1a1818" stroke-width="1.6"/></svg>
<svg class="ic" style="left:1448px;top:1188px" width="64" height="42" viewBox="1448 1188 64 42" ><g stroke="#6e6766" stroke-width="4" stroke-linecap="butt" stroke-linejoin="miter"><polyline points="1464.5,1197.4 1453.4,1208.5 1464.5,1219.6"/><path d="M1486.200 1190.8L1474.600 1226.200"/><polyline points="1494.500,1197.400 1505.600,1208.500 1494.500,1219.600"/></g></svg>
<span class="t" style="left:1336.91px;top:1271.09px;font-size:28.6px;font-weight:700;color:#4b4544;letter-spacing:-0.162px;">There's nothing here.</span>
<span class="t" style="left:1032.07px;top:1319.47px;font-size:25.2px;font-weight:400;color:#6f6867;letter-spacing:0.380px;">Press Compile above to preview the SQL dbt will run against your warehouse.</span>
<div class="redbox" style="left:493.5px;top:-3.5px;width:1973px;height:1049px"></div>
</div>
</body></html>
